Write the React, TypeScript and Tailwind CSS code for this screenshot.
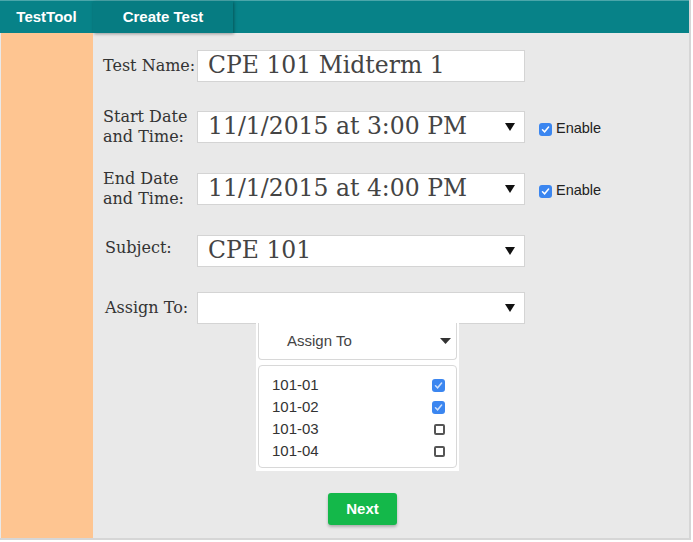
import React from "react";

const serif = { fontFamily: '"DejaVu Serif", serif' };

function Caret() {
  return (
    <svg width="10" height="8" viewBox="0 0 10 8" className="shrink-0">
      <path d="M0 0 L10 0 L5 8 Z" fill="#111" />
    </svg>
  );
}

function BlueCheck({ faint }: { faint?: boolean }) {
  return (
    <span className="flex h-[13px] w-[13px] items-center justify-center rounded-[3px] bg-[#3b86f0]">
      <svg width="9" height="9" viewBox="0 0 9 9">
        <path
          d="M1.5 4.8 L3.6 6.8 L7.6 2"
          stroke={faint ? "#cfe0fb" : "#fff"}
          strokeWidth="1.5"
          fill="none"
          strokeLinecap="round"
        />
      </svg>
    </span>
  );
}

function EmptyCheck() {
  return <span className="block h-[11px] w-[11px] rounded-[2px] border-2 border-[#555]" />;
}

function Enable() {
  return (
    <div className="ml-[14px] mt-[4px] flex items-center gap-[4px] font-['Liberation_Sans',sans-serif] text-[14.5px] text-[#222]">
      <BlueCheck />
      <span>Enable</span>
    </div>
  );
}

function Field({ value, select }: { value: string; select?: boolean }) {
  return (
    <div
      className="flex h-[32px] w-[328px] shrink-0 items-center justify-between border border-[#d4d4d4] bg-white pl-[10px] pr-[9px] text-[23.5px] text-[#444]"
      style={serif}
    >
      <span className="whitespace-nowrap leading-none">{value}</span>
      {select ? <Caret /> : null}
    </div>
  );
}

const groups = [
  { id: "101-01", on: true },
  { id: "101-02", on: true },
  { id: "101-03", on: false },
  { id: "101-04", on: false },
];

export default function App() {
  return (
    <div className="h-[542px] w-[693px] bg-white">
      <div className="flex h-[540px] w-[691px] flex-col border-b-2 border-r-2 border-[#d6d6d6] bg-[#e9e9e9]">
        {/* Top bar */}
        <header className="flex h-[33px] shrink-0 border-t border-[#4aa6aa] bg-[#078288] font-['Liberation_Sans',sans-serif] text-[15px] font-bold text-white">
          <div className="flex w-[93px] items-center justify-center">TestTool</div>
          <div className="flex w-[140px] items-center justify-center bg-[#067c82] shadow-[1px_1px_3px_rgba(0,0,0,0.35)]">
            Create Test
          </div>
        </header>

        <div className="flex min-h-0 flex-1">
          <aside className="ml-px w-[92px] bg-[#fec591]" />

          <main className="flex flex-1 flex-col pl-[10px] pt-[17px] text-[16px] text-[#333]" style={serif}>
            <div className="flex items-center">
              <label className="w-[94px]">Test Name:</label>
              <Field value="CPE 101 Midterm 1" />
            </div>

            <div className="mt-[25px] flex items-center">
              <label className="w-[94px] leading-[20px]">
                Start Date
                <br />
                and Time:
              </label>
              <Field value="11/1/2015 at 3:00 PM" select />
              <Enable />
            </div>

            <div className="mt-[22px] flex items-center">
              <label className="w-[94px] leading-[20px]">
                End Date
                <br />
                and Time:
              </label>
              <Field value="11/1/2015 at 4:00 PM" select />
              <Enable />
            </div>

            <div className="mt-[26px] flex items-center">
              <label className="w-[94px] pl-[2px] pb-[7px]">Subject:</label>
              <Field value="CPE 101" select />
            </div>

            <div className="mt-[25px] flex items-center">
              <label className="w-[94px] pl-[2px]">Assign To:</label>
              <Field value="" select />
            </div>

            {/* Assign To dropdown panel */}
            <div className="ml-[153px] -mt-px w-[203px] bg-white px-[2px] pb-[3px] font-['Liberation_Sans',sans-serif]">
              <div className="flex h-[37px] items-center justify-between rounded-b-[4px] border border-t-0 border-[#d8d8d8] pl-[28px] pr-[5px] text-[15px] text-[#444]">
                <span>Assign To</span>
                <svg width="11" height="6" viewBox="0 0 11 6">
                  <path d="M0 0 L11 0 L5.5 6 Z" fill="#333" />
                </svg>
              </div>
              <div className="mt-[5px] flex flex-col rounded-[4px] border border-[#d8d8d8] pb-[5px] pl-[13px] pr-[11px] pt-[8px] text-[15px] text-[#333]">
                {groups.map((g) => (
                  <div key={g.id} className="flex h-[22px] items-center justify-between">
                    <span>{g.id}</span>
                    {g.on ? <BlueCheck faint /> : <EmptyCheck />}
                  </div>
                ))}
              </div>
            </div>

            <div className="mt-[22px] ml-[225px]">
              <button className="h-[32px] w-[69px] rounded-[3px] bg-[#14b84a] font-['Liberation_Sans',sans-serif] text-[15px] font-bold text-white shadow-[0_2px_3px_rgba(0,0,0,0.25)]">
                Next
              </button>
            </div>
          </main>
        </div>
      </div>
    </div>
  );
}
